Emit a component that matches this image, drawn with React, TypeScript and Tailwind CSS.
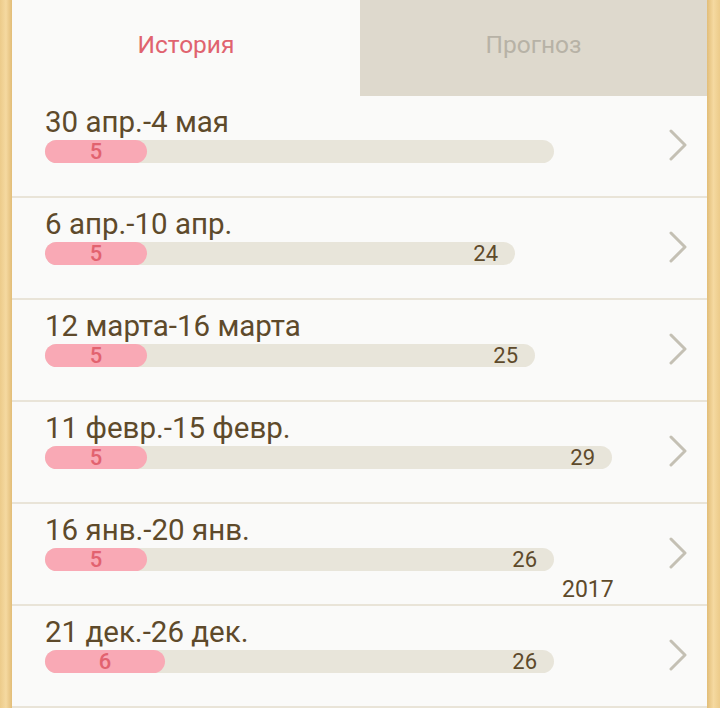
import * as React from 'react';

type Week = {
  label: string;
  done: number;
  total?: number;
  barW: number;
  doneW: number;
  year?: string;
};

const weeks: Week[] = [
  { label: '30 апр.-4 мая', done: 5, barW: 509, doneW: 102 },
  { label: '6 апр.-10 апр.', done: 5, total: 24, barW: 470, doneW: 102 },
  { label: '12 марта-16 марта', done: 5, total: 25, barW: 490, doneW: 102 },
  { label: '11 февр.-15 февр.', done: 5, total: 29, barW: 567, doneW: 102 },
  { label: '16 янв.-20 янв.', done: 5, total: 26, barW: 509, doneW: 102, year: '2017' },
  { label: '21 дек.-26 дек.', done: 6, total: 26, barW: 509, doneW: 120 },
];

const Chevron = () => (
  <svg width="18" height="32" viewBox="0 0 18 32" fill="none" className="-mt-[12px] shrink-0 self-center">
    <path d="M2 2 L16 16 L2 30" stroke="#c4c0b4" strokeWidth="3" strokeLinecap="round" strokeLinejoin="round" />
  </svg>
);

const WeekRow = ({ week }: { week: Week }) => (
  <div className="relative flex h-[102px] border-b-2 border-[#e9e4d8] pl-[33px] pr-[20px] pt-[10px]">
    <div className="flex flex-1 flex-col">
      <div className="text-[29.5px] leading-[32px] text-[#5e4a2b]">{week.label}</div>
      <div
        className="mt-[2px] flex h-[23px] items-center rounded-full bg-[#e8e5da]"
        style={{ width: week.barW }}
      >
        <div
          className="flex h-[23px] items-center justify-center rounded-full bg-[#f9a9b5] text-[22px] font-medium text-[#e2626f]"
          style={{ width: week.doneW }}
        >
          {week.done}
        </div>
        {week.total !== undefined && (
          <div className="ml-auto pr-[17px] text-[22px] text-[#5e4a2b]">{week.total}</div>
        )}
      </div>
    </div>
    {week.year && (
      <div className="absolute left-[550px] top-[73px] text-[23px] leading-[26px] text-[#5e4a2b]">
        {week.year}
      </div>
    )}
    <Chevron />
  </div>
);

export default function App() {
  return (
    <div
      className="flex h-[708px] w-[720px] overflow-hidden bg-[#f1d295]"
      style={{ fontFamily: 'Roboto, "Noto Sans", sans-serif' }}
    >
      <div className="w-[12px] shrink-0 bg-gradient-to-r from-[#eccb8a] via-[#f5d9a0] to-[#e2bd78]" />
      <div className="flex w-[695px] flex-col bg-[#fafaf9]">
        <div className="flex h-[96px] shrink-0">
          <div className="flex w-[348px] items-center justify-center pb-[6px] bg-[#fafaf9] text-[24.5px] text-[#e0636f]">
            История
          </div>
          <div className="flex flex-1 items-center justify-center pb-[6px] bg-[#ded9cd] text-[24.5px] text-[#b7b2a6]">
            Прогноз
          </div>
        </div>
        <div className="flex flex-col">
          {weeks.map((w) => (
            <WeekRow key={w.label} week={w} />
          ))}
        </div>
      </div>
      <div className="w-[13px] shrink-0 bg-gradient-to-r from-[#e2bd78] via-[#f5d9a0] to-[#eccb8a]" />
    </div>
  );
}
